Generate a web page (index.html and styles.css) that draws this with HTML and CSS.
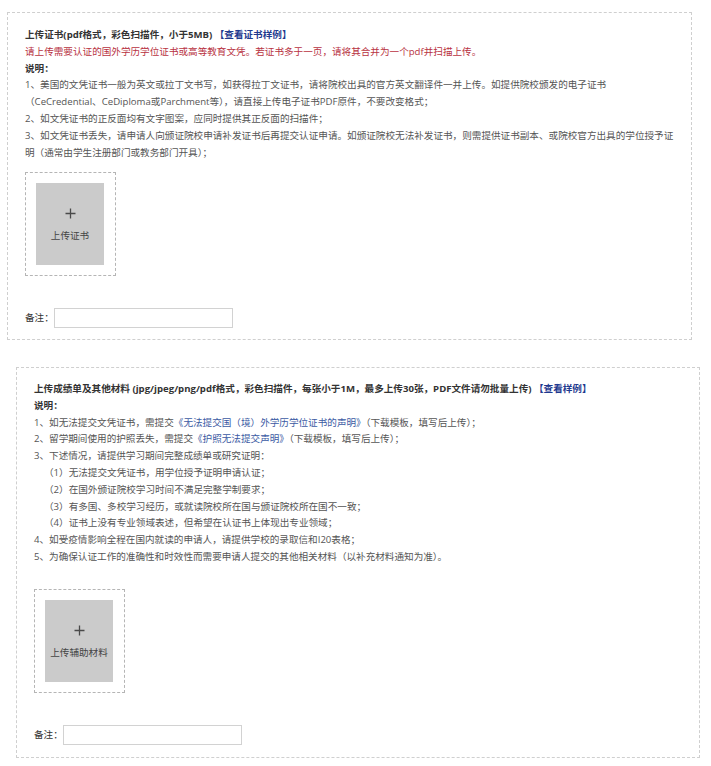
FILE: index.html
```html
<!DOCTYPE html>
<html lang="zh-CN">
<head>
<meta charset="utf-8">
<link rel="stylesheet" href="styles.css">
</head>
<body>
<section class="panel panel-one">
  <div class="line title">上传证书(pdf格式，彩色扫描件，小于5MB) <a class="sample">【查看证书样例】</a></div>
  <div class="line warn">请上传需要认证的国外学历学位证书或高等教育文凭。若证书多于一页，请将其合并为一个pdf并扫描上传。</div>
  <div class="line label">说明：</div>
  <div class="line">1、美国的文凭证书一般为英文或拉丁文书写，如获得拉丁文证书，请将院校出具的官方英文翻译件一并上传。如提供院校颁发的电子证书<br>（CeCredential、CeDiploma或Parchment等），请直接上传电子证书PDF原件，不要改变格式；</div>
  <div class="line">2、如文凭证书的正反面均有文字图案，应同时提供其正反面的扫描件；</div>
  <div class="line">3、如文凭证书丢失，请申请人向颁证院校申请补发证书后再提交认证申请。如颁证院校无法补发证书，则需提供证书副本、或院校官方出具的学位授予证<br>明（通常由学生注册部门或教务部门开具）；</div>
  <div class="upload upload-one">
    <div class="upload-btn">
      <svg class="plus" width="11" height="11" viewBox="0 0 11 11"><path d="M5.5 0.5V10.5M0.5 5.5H10.5" stroke="#4a4a4a" stroke-width="1.3" fill="none"/></svg>
      <span class="upload-text">上传证书</span>
    </div>
  </div>
  <div class="remark">
    <span class="remark-label">备注：</span>
    <span class="remark-input"></span>
  </div>
</section>

<section class="panel panel-two">
  <div class="line title">上传成绩单及其他材料 (jpg/jpeg/png/pdf格式，彩色扫描件，每张小于1M，最多上传30张，PDF文件请勿批量上传) <a class="sample">【查看样例】</a></div>
  <div class="line label">说明：</div>
  <div class="line">1、如无法提交文凭证书，需提交<a class="doc">《无法提交国（境）外学历学位证书的声明》</a>（下载模板，填写后上传）；</div>
  <div class="line">2、留学期间使用的护照丢失，需提交<a class="doc">《护照无法提交声明》</a>（下载模板，填写后上传）；</div>
  <div class="line">3、下述情况，请提供学习期间完整成绩单或研究证明：</div>
  <div class="line sub">（1）无法提交文凭证书，用学位授予证明申请认证；</div>
  <div class="line sub">（2）在国外颁证院校学习时间不满足完整学制要求；</div>
  <div class="line sub">（3）有多国、多校学习经历，或就读院校所在国与颁证院校所在国不一致；</div>
  <div class="line sub">（4）证书上没有专业领域表述，但希望在认证书上体现出专业领域；</div>
  <div class="line">4、如受疫情影响全程在国内就读的申请人，请提供学校的录取信和I20表格；</div>
  <div class="line">5、为确保认证工作的准确性和时效性而需要申请人提交的其他相关材料（以补充材料通知为准）。</div>
  <div class="upload upload-two">
    <div class="upload-btn">
      <svg class="plus" width="11" height="11" viewBox="0 0 11 11"><path d="M5.5 0.5V10.5M0.5 5.5H10.5" stroke="#4a4a4a" stroke-width="1.3" fill="none"/></svg>
      <span class="upload-text">上传辅助材料</span>
    </div>
  </div>
  <div class="remark">
    <span class="remark-label">备注：</span>
    <span class="remark-input"></span>
  </div>
</section>
</body>
</html>
```
FILE: styles.css
```css
html, body {
  margin: 0;
  padding: 0;
  background: #ffffff;
}
body {
  font-family: "Open Sans", "Noto Sans CJK SC", sans-serif;
  font-size: 9.6px;
  color: #555555;
  width: 711px;
  padding-top: 12px;
}
.panel {
  box-sizing: border-box;
  border: 1px dashed #cfcfcf;
  padding: 14px 18px 11px 17px;
}
.panel-one {
  margin-left: 7px;
  width: 685px;
  height: 328px;
}
.panel-two {
  margin-left: 16px;
  margin-top: 27px;
  width: 684px;
  height: 391px;
  padding-top: 13px;
}
.line {
  line-height: 16.8px;
  white-space: nowrap;
}
.title {
  font-weight: bold;
  color: #333333;
}
.sample {
  color: #1f3a8f;
  font-weight: bold;
}
.warn {
  color: #b8323f;
}
.label {
  font-weight: bold;
  color: #333333;
}
.doc {
  color: #3b5aa3;
}
.sub {
  padding-left: 10px;
}
.upload {
  box-sizing: border-box;
  width: 91px;
  height: 104px;
  border: 1px dashed #b5b5b5;
  padding: 10px;
}
.upload-one {
  margin-top: 11px;
}
.upload-two {
  margin-top: 23px;
  margin-left: 0;
}
.upload-btn {
  width: 68px;
  height: 82px;
  background: #cbcbcb;
  display: flex;
  flex-direction: column;
  align-items: center;
}
.plus {
  margin-top: 25px;
  display: block;
}
.upload-text {
  margin-top: 10px;
  line-height: 14px;
  color: #444444;
  white-space: nowrap;
}
.remark {
  margin-top: 32px;
  display: flex;
  align-items: center;
  height: 20px;
}
.remark-label {
  color: #333333;
  line-height: 20px;
  white-space: nowrap;
}
.remark-input {
  box-sizing: border-box;
  width: 179px;
  height: 20px;
  border: 1px solid #d2d2d2;
  background: #ffffff;
}
```
